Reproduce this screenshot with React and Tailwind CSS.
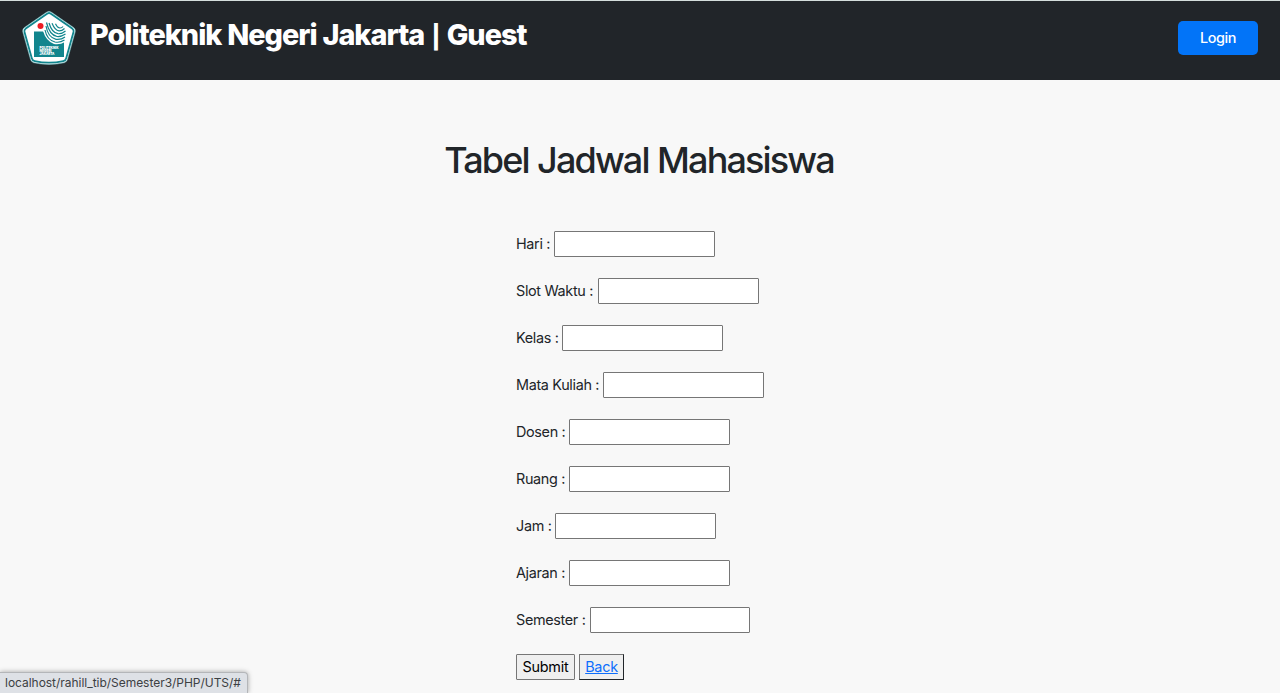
const fields = [
  { label: "Hari :", name: "hari", width: "w-[38px]" },
  { label: "Slot Waktu :", name: "slot", width: "w-[82px]" },
  { label: "Kelas :", name: "kelas", width: "w-[46px]" },
  { label: "Mata Kuliah :", name: "matkul", width: "w-[87px]" },
  { label: "Dosen :", name: "dosen", width: "w-[53px]" },
  { label: "Ruang :", name: "ruang", width: "w-[53px]" },
  { label: "Jam :", name: "jam", width: "w-[39px]" },
  { label: "Ajaran :", name: "ajaran", width: "w-[53px]" },
  { label: "Semester :", name: "semester", width: "w-[74px]" },
];

function Logo() {
  return (
    <svg className="h-[56px] w-[56px] shrink-0" viewBox="0 0 56 56" fill="none">
      <path
        d="M28 1.300 Q29.300 1.300 31.300 2.800 L53 17.800 Q54.700 19.300 54.200 22 L46.600 49.300 Q46 52 43.400 52.700 Q28 56.200 12.600 52.700 Q10 52 9.400 49.300 L1.800 22 Q1.300 19.300 3 17.800 L24.700 2.800 Q26.700 1.300 28 1.300Z"
        fill="#fff"
        stroke="#5fb0b5"
        strokeWidth="0.600"
      />
      <path
        d="M28 3 Q29 3 31 4.400 L51.200 18.600 Q53 19.900 52.500 22 L45.200 48.200 Q44.600 50.600 42.300 51.100 Q28 54.200 13.700 51.100 Q11.400 50.600 10.800 48.200 L3.500 22 Q3 19.900 4.800 18.600 L25 4.400 Q27 3 28 3Z"
        stroke="#11858d"
        strokeWidth="1.800"
      />
      <rect x="13" y="21.500" width="30" height="25.500" fill="#11858d" />
      <circle cx="19.500" cy="16" r="3" fill="#ed1c24" />
      <path d="M22 21 Q25 31 33 34 Q39 35 44 32 L44 21Z" fill="#fff" />
      <g stroke="#11858d" strokeWidth="1.200">
        <path d="M24 20 Q26 30 34 32 Q39 33 43.500 30" />
        <path d="M25 16 Q27 27.500 35 29.300 Q40 30 44 27" />
        <path d="M25.500 12.500 Q28.500 25 36 26.500 Q40 27 44.500 24" />
        <path d="M28 13 Q31 23 37 23.700 Q41 24 44.500 21" />
        <path d="M31 13.300 Q34 20.500 38 20.900 Q41 21 43.500 18.500" />
        <path d="M34.500 13.800 Q36.500 18 39 18 Q41 18 42 16.500" />
      </g>
      <g
        fill="#fff"
        className="font-['Inter',sans-serif] text-[4px] font-black"
      >
        <text x="18.500" y="38.500" textLength="19" lengthAdjust="spacingAndGlyphs">POLITEKNIK</text>
        <text x="18.500" y="41.800" textLength="12" lengthAdjust="spacingAndGlyphs">NEGERI</text>
        <text x="18.500" y="45.100" textLength="15" lengthAdjust="spacingAndGlyphs">JAKARTA</text>
      </g>
    </svg>
  );
}

export default function App() {
  return (
    <div className="relative flex h-[693px] w-full flex-col overflow-hidden bg-[#f8f8f8] font-['Inter',sans-serif] text-[#212529]">
      <header className="flex h-20 shrink-0 items-start justify-between border-t border-[#d5dedc] bg-[#212529] pr-[22px] pl-[21px]">
        <div className="flex pt-[9px]">
          <Logo />
          <h1 className="ml-[13px] pt-[7px] text-[28.800px] leading-[36px] font-extrabold tracking-[-0.980px] [word-spacing:0.400px] whitespace-nowrap text-white">
            Politeknik Negeri Jakarta{" "}
            <span className="mx-[1.500px] inline-block text-[23px] leading-none">|</span>{" "}
            Guest
          </h1>
        </div>
        <button className="mt-5 h-[34px] w-20 rounded-[5px] bg-[#0274f8] text-[14.400px] font-medium tracking-[-0.400px] text-white">
          Login
        </button>
      </header>

      <main className="flex flex-col items-center pt-[58px]">
        <h2 className="mr-[2px] text-[36px] leading-[44px] font-medium tracking-[-1.860px] [word-spacing:0.700px] whitespace-nowrap">
          Tabel Jadwal Mahasiswa
        </h2>
        <form className="mt-[49px] flex w-[248px] flex-col gap-[21px]">
          {fields.map((f) => (
            <div key={f.name} className="flex h-[26px] items-center">
              <label
                htmlFor={f.name}
                className={`${f.width} shrink-0 text-[14.400px] tracking-[-0.330px] whitespace-nowrap`}
              >
                {f.label}
              </label>
              <input
                id={f.name}
                name={f.name}
                className={`h-[26px] shrink-0 rounded-[1px] border border-[#767676] bg-white ${
                  f.name === "semester" ? "w-[160px]" : "w-[161px]"
                }`}
              />
            </div>
          ))}
          <div className="flex gap-1">
            <button
              type="button"
              className="h-[26px] w-[59px] rounded-[1px] border border-[#767676] bg-[#efefef] text-[14.400px] tracking-[-0.250px] text-black"
            >
              Submit
            </button>
            <button
              type="button"
              className="h-[26px] w-[45px] border border-t-[#767676] border-r-[#212529] border-b-[#212529] border-l-[#767676] bg-[#efefef] text-[14.400px] tracking-[-0.250px] text-[#0d6efd] underline"
            >
              Back
            </button>
          </div>
        </form>
      </main>

      <div className="absolute bottom-0 left-0 flex h-[21px] w-[248px] items-center rounded-tr-[4px] border-t border-r border-[#b4b6b9] bg-[#dee1e6] pl-[5px] text-[12px] tracking-[-0.030px] whitespace-nowrap text-[#3c4043] shadow-[0_0_5px_rgba(0,0,0,0.350)]">
        localhost/rahill_tib/Semester3/PHP/UTS/#
      </div>
    </div>
  );
}
